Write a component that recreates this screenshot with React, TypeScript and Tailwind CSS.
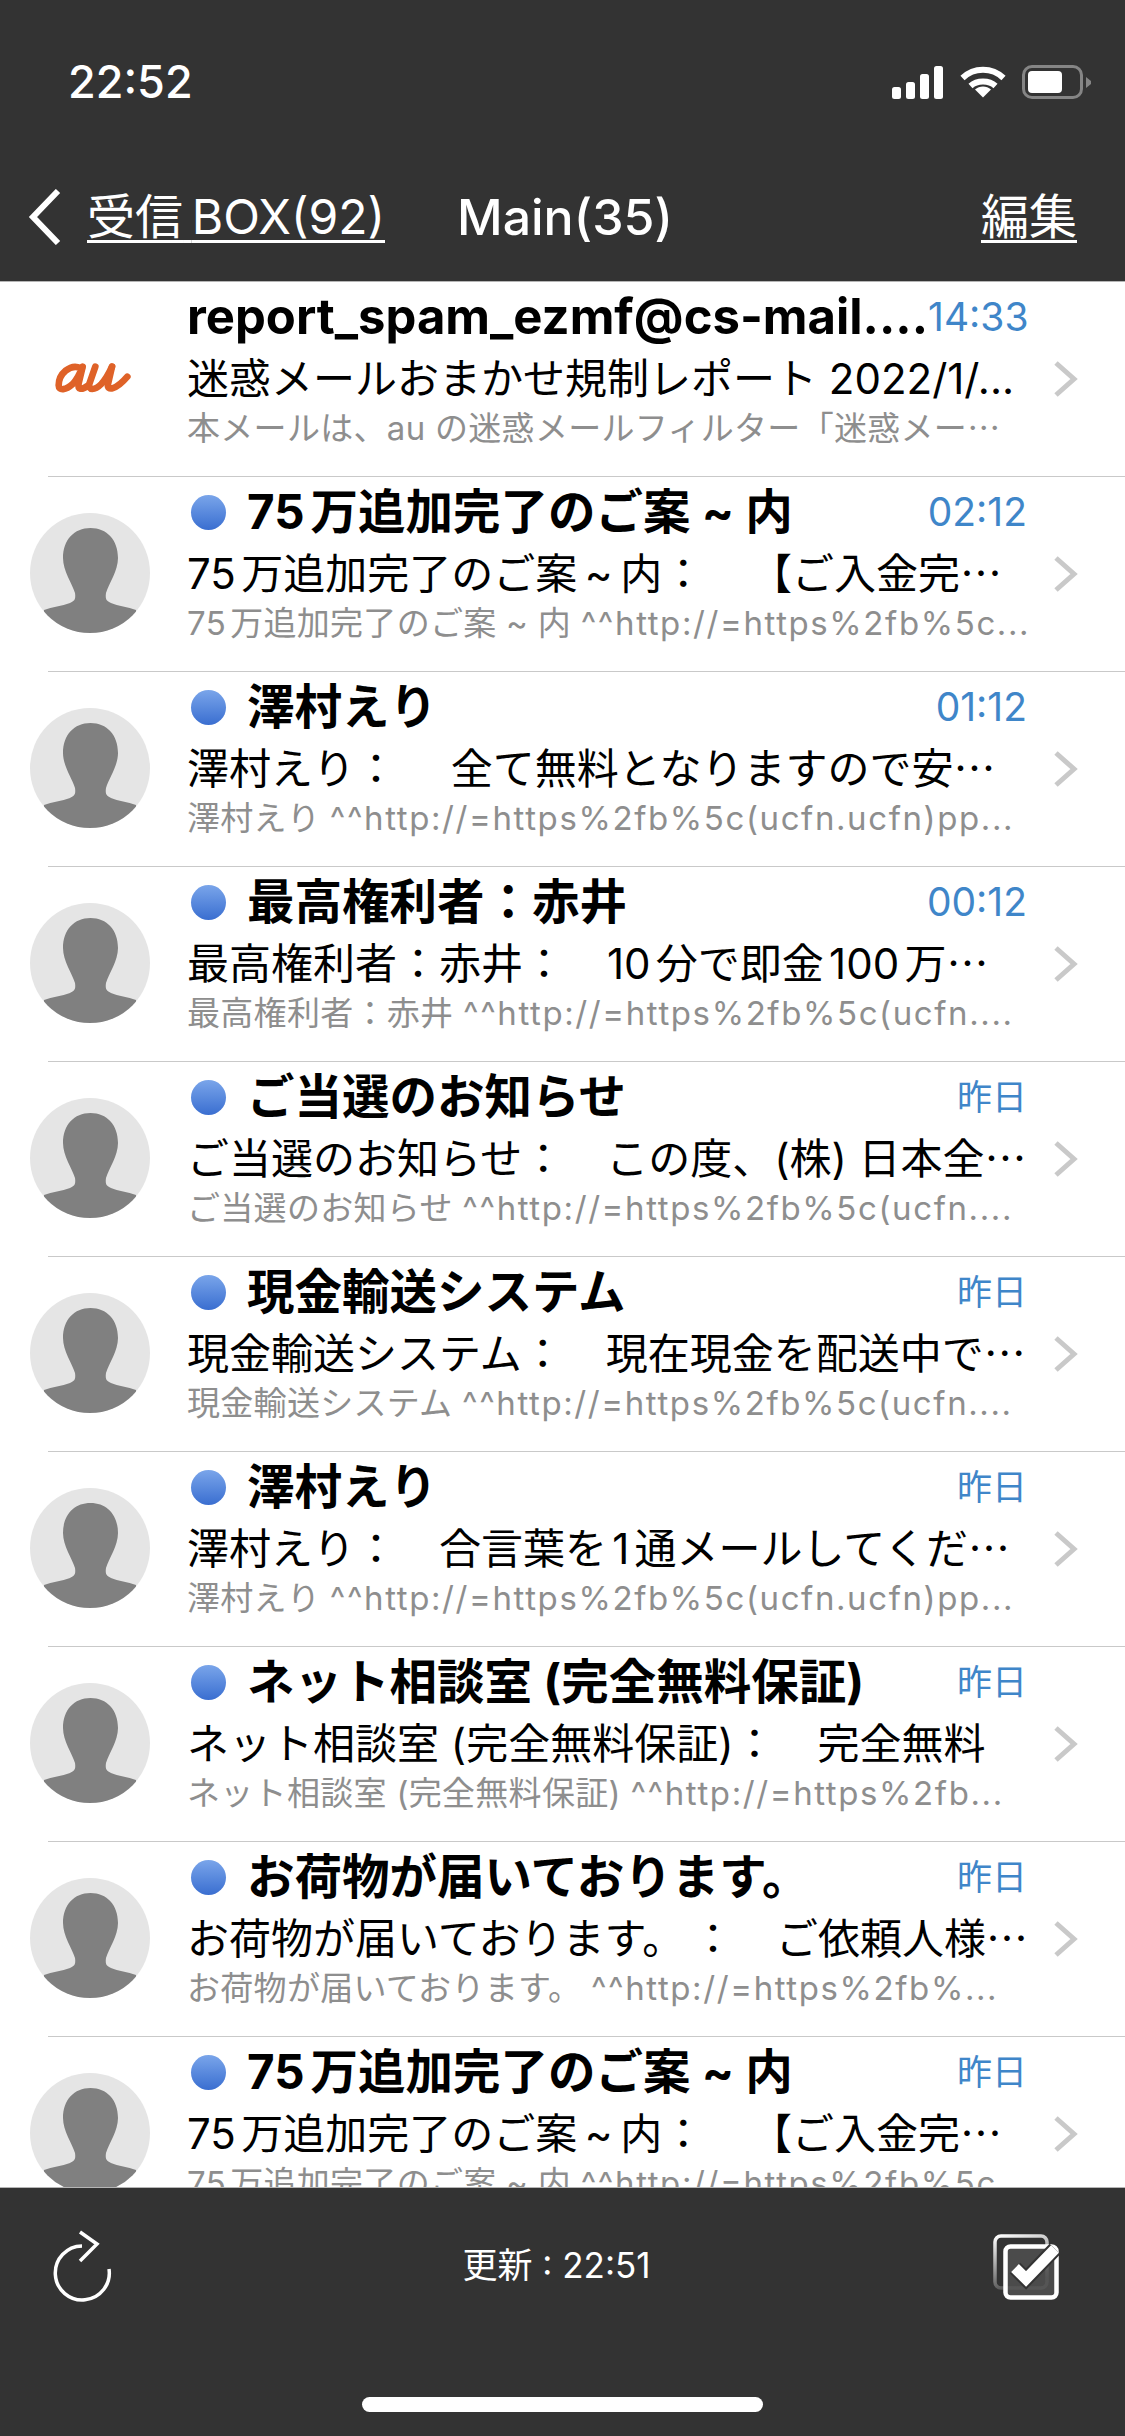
import React from "react";

type Mail = {
  title: string;
  subject: string;
  preview: string;
  time: string;
};

const mails: Mail[] = [
  {
    title: "75万追加完了のご案 ~ 内",
    subject: "75万追加完了のご案\u2009~\u2009内：　\u200a【ご入金完⋯",
    preview: "75万追加完了のご案 ~ 内 ^^http://=https%2fb%5c...",
    time: "02:12",
  },
  {
    title: "澤村えり",
    subject: "澤村えり：　 全て無料となりますので安⋯",
    preview: "澤村えり ^^http://=https%2fb%5c(ucfn.ucfn)pp...",
    time: "01:12",
  },
  {
    title: "最高権利者：赤井",
    subject: "最高権利者：赤井：　10分で即金100万⋯",
    preview: "最高権利者：赤井 ^^http://=https%2fb%5c(ucfn....",
    time: "00:12",
  },
  {
    title: "ご当選のお知らせ",
    subject: "ご当選のお知らせ：　この度、(株) 日本全⋯",
    preview: "ご当選のお知らせ ^^http://=https%2fb%5c(ucfn....",
    time: "昨日",
  },
  {
    title: "現金輸送システム",
    subject: "現金輸送システム：　現在現金を配送中で⋯",
    preview: "現金輸送システム ^^http://=https%2fb%5c(ucfn....",
    time: "昨日",
  },
  {
    title: "澤村えり",
    subject: "澤村えり：　合言葉を1通メールしてくだ⋯",
    preview: "澤村えり ^^http://=https%2fb%5c(ucfn.ucfn)pp...",
    time: "昨日",
  },
  {
    title: "ネット相談室 (完全無料保証)",
    subject: "ネット相談室 (完全無料保証)：　完全無料",
    preview: "ネット相談室 (完全無料保証) ^^http://=https%2fb...",
    time: "昨日",
  },
  {
    title: "お荷物が届いております。",
    subject: "お荷物が届いております。\u2009：　ご依頼人様⋯",
    preview: "お荷物が届いております。 ^^http://=https%2fb%...",
    time: "昨日",
  },
  {
    title: "75万追加完了のご案 ~ 内",
    subject: "75万追加完了のご案\u2009~\u2009内：　\u200a【ご入金完⋯",
    preview: "75万追加完了のご案 ~ 内 ^^http://=https%2fb%5c",
    time: "昨日",
  },
];

const Avatar = () => (
  <div className="mt-[36px] ml-[30px] h-[120px] w-[120px] shrink-0 overflow-hidden rounded-full bg-[#e5e5e5]">
    <svg viewBox="0 0 120 120" className="h-full w-full">
      <path
        fill="#808080"
        d="M60.5 15C44 15 33 27 33 45C33 58 42 70 45 80C46 87 44 88 40 90C32 93 22 94 14 97L14 120L106 120L106 97C98 94 88 93 81 90C77 88 75 87 76 80C79 70 88 58 88 45C88 27 77 15 60.5 15Z"
      />
    </svg>
  </div>
);

const AuLogo = () => (
  <svg
    viewBox="0 0 300 165"
    className="mt-[68px] ml-[40px] h-[55px] w-[100px]"
    fill="none"
    stroke="#df6228"
    strokeWidth="20"
    strokeLinecap="round"
  >
    <path d="M122 54C90 40 56 72 56 106C56 124 78 120 98 102C110 90 120 70 126 54" />
    <path d="M128 50L116 100C112 120 126 120 142 108" />
    <path d="M166 50L148 102C144 122 164 122 184 102C198 87 208 68 216 50" />
    <path d="M216 50L204 102C200 124 228 120 262 80" />
  </svg>
);

const Chevron = () => (
  <svg viewBox="0 0 24 36" className="h-[36px] w-[24px]" fill="none">
    <path d="M2 2L20 18L2 34" stroke="#c9c9c9" strokeWidth="5" />
  </svg>
);

const MailRow = ({
  title,
  subject,
  preview,
  time,
  unread,
  logo,
}: Mail & { unread?: boolean; logo?: boolean }) => {
  // the sender name and the link part of a preview are spaced differently
  const urlAt = preview.indexOf("^^");
  const name = urlAt < 0 ? preview : preview.slice(0, urlAt);
  const url = urlAt < 0 ? "" : preview.slice(urlAt);

  return (
    <div>
      <div className="flex h-[194px]">
        <div className="w-[187px] shrink-0">{logo ? <AuLogo /> : <Avatar />}</div>
        <div className="min-w-0 flex-1 pt-[5px]">
          <div className="flex h-[60px] items-center">
            {unread && (
              <span className="mr-[21px] ml-[4px] h-[35px] w-[35px] shrink-0 rounded-full bg-gradient-to-b from-[#7aa5ea] to-[#3a6ed0]" />
            )}
            <span className={`font-bold whitespace-pre text-black ${logo ? "text-[49px]" : "text-[47.5px]"}`}>
              {title}
            </span>
            <span className={`ml-auto pr-[1px] whitespace-nowrap text-[#3f86c9] ${time === "昨日" ? "text-[35px]" : "text-[39px]"}`}>
              {time}
            </span>
          </div>
          <div className="flex h-[62px] items-center text-[42px] whitespace-pre text-black">
            {subject}
          </div>
          <div className="h-[38px] text-[33px] leading-[38px] tracking-[0.3px] whitespace-pre text-[#8e8e8e]">
            {name}
            <span className="tracking-[1.6px]">{url}</span>
          </div>
        </div>
        <div className="w-[97px] shrink-0 pt-[79px] pl-[26px]">
          <Chevron />
        </div>
      </div>
      <div className="ml-[48px] h-px bg-[#c9c9c9]" />
    </div>
  );
};

export default function App() {
  return (
    <div className="flex h-[2436px] w-[1125px] flex-col overflow-hidden bg-white font-['Inter','Noto_Sans_CJK_JP',sans-serif] [text-autospace:normal]">
      {/* top bar */}
      <header className="h-[282px] shrink-0 border-b border-[#b5b5b5] bg-[#333333] text-white">
        <div className="mt-[56px] flex h-[52px] items-center justify-between pr-[34px] pl-[68px]">
          <span className="text-[45px] font-medium">22:52</span>
          <div className="flex items-center">
            <svg width="51" height="33" viewBox="0 0 51 33" fill="white">
              <rect x="0" y="21" width="9" height="12" rx="2.5" />
              <rect x="14" y="16" width="9" height="17" rx="2.5" />
              <rect x="28" y="8" width="9" height="25" rx="2.5" />
              <rect x="42" y="0" width="9" height="33" rx="2.5" />
            </svg>
            <svg className="ml-[17px]" width="46" height="32" viewBox="0 0 46 32" fill="none" stroke="white" strokeWidth="6">
              <path d="M2.5 12C14 1 32 1 43.5 12" />
              <path d="M10.5 20C17 14 29 14 35.5 20" />
              <path d="M23 31.5L15 23.5C19.5 19.5 26.5 19.5 31 23.5Z" fill="white" stroke="none" />
            </svg>
            <div className="ml-[16px] flex items-center">
              <div className="flex h-[34px] w-[61px] items-center rounded-[10px] border-[3px] border-[#858585] pl-[3px]">
                <div className="h-[22px] w-[34px] rounded-[4px] bg-white" />
              </div>
              <svg className="ml-[3px]" width="5" height="11" viewBox="0 0 5 11" fill="#858585">
                <path d="M0 0L5 4V7L0 11Z" />
              </svg>
            </div>
          </div>
        </div>
        <div className="mt-[79px] flex h-[60px] items-center pr-[48px] pl-[28px] text-[48px] leading-none">
          <svg width="34" height="56" viewBox="0 0 34 56" fill="none" stroke="white" strokeWidth="6">
            <path d="M30 2L5 28L30 54" />
          </svg>
          <span className="ml-[25px] underline decoration-[3px] underline-offset-[6px]">受信{"\u2009"}BOX(92)</span>
          <span className="ml-[72px] text-[50px] font-medium">Main(35)</span>
          <span className="ml-auto underline decoration-[3px] underline-offset-[6px]">編集</span>
        </div>
      </header>

      {/* message list */}
      <main className="min-h-0 flex-1 overflow-hidden">
        <MailRow
          logo
          title="report_spam_ezmf@cs-mail...."
          subject="迷惑メールおまかせ規制レポート 2022/1/..."
          preview="本メールは、au の迷惑メールフィルター「迷惑メー⋯"
          time="14:33"
        />
        {mails.map((mail, i) => (
          <MailRow key={i} unread {...mail} />
        ))}
      </main>

      {/* bottom toolbar */}
      <footer className="relative h-[249px] shrink-0 border-t border-[#b5b5b5] bg-[#333333] text-white">
        <div className="flex items-start justify-between pt-[39px] pr-[65px] pl-[50px]">
          <svg width="65" height="76" viewBox="0 0 65 76" fill="none" stroke="white" strokeWidth="3.5">
            <path d="M32 19A27 27 0 1 0 59 42" />
            <path d="M30 5L47 17L30 34" />
          </svg>
          <span className="mt-[12px] ml-[5px] text-[35px] whitespace-pre">更新 : 22:51</span>
          <svg className="mt-[7px]" width="67" height="66" viewBox="0 0 67 66" fill="none">
            <defs>
              <linearGradient id="backBox" x1="0" y1="0" x2="0.3" y2="1">
                <stop offset="0" stopColor="#ffffff" />
                <stop offset="1" stopColor="#555555" />
              </linearGradient>
            </defs>
            <rect x="2" y="2" width="52" height="52" rx="6" stroke="url(#backBox)" strokeWidth="3.5" />
            <rect x="12.5" y="12.5" width="51" height="51" rx="5" fill="#555555" fillOpacity="0.7" stroke="white" strokeWidth="4.5" />
            <path d="M22 34L33 45L62 15" stroke="#333333" strokeWidth="15" />
            <path d="M22 34L33 45L62 15" stroke="white" strokeWidth="11" />
          </svg>
        </div>
        <div className="absolute bottom-[24px] left-[362px] h-[15px] w-[401px] rounded-full bg-white" />
      </footer>
    </div>
  );
}
